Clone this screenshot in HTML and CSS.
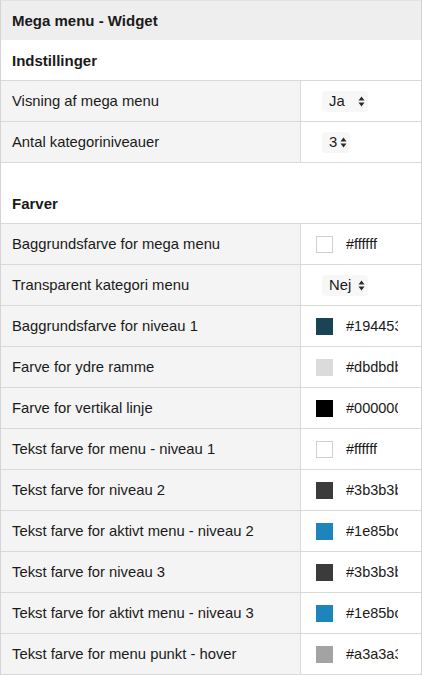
FILE: index.html
```html
<!DOCTYPE html>
<html lang="da">
<head>
  <meta charset="UTF-8" />
  <meta name="viewport" content="width=device-width, initial-scale=1.0"/>
  <title>Mega menu - Widget</title>
  <link rel="stylesheet" href="styles.css">
</head>
<body>

  <div class="widget">
    <div class="widget-title">Mega menu - Widget</div>

    <div class="section">Indstillinger</div>

    <div class="row">
      <div class="label">Visning af mega menu</div>
      <div class="value">
        <span class="select wide"><span class="select-text">Ja</span><svg class="arrows" width="7" height="11" viewBox="0 0 7 11"><path d="M0.5 4.5 L3.5 0.5 L6.5 4.5 Z M0.5 6.5 L3.5 10.5 L6.5 6.5 Z"/></svg></span>
      </div>
    </div>

    <div class="row">
      <div class="label">Antal kategoriniveauer</div>
      <div class="value">
        <span class="select"><span class="select-text">3</span><svg class="arrows" width="7" height="11" viewBox="0 0 7 11"><path d="M0.5 4.5 L3.5 0.5 L6.5 4.5 Z M0.5 6.5 L3.5 10.5 L6.5 6.5 Z"/></svg></span>
      </div>
    </div>

    <div class="section spaced">Farver</div>

    <div class="row">
      <div class="label">Baggrundsfarve for mega menu</div>
      <div class="value"><span class="swatch light" style="background:#ffffff"></span><span class="hex">#ffffff</span></div>
    </div>

    <div class="row">
      <div class="label">Transparent kategori menu</div>
      <div class="value">
        <span class="select wide"><span class="select-text">Nej</span><svg class="arrows" width="7" height="11" viewBox="0 0 7 11"><path d="M0.5 4.5 L3.5 0.5 L6.5 4.5 Z M0.5 6.5 L3.5 10.5 L6.5 6.5 Z"/></svg></span>
      </div>
    </div>

    <div class="row">
      <div class="label">Baggrundsfarve for niveau 1</div>
      <div class="value"><span class="swatch" style="background:#194453"></span><span class="hex">#194453</span></div>
    </div>

    <div class="row">
      <div class="label">Farve for ydre ramme</div>
      <div class="value"><span class="swatch" style="background:#dbdbdb"></span><span class="hex">#dbdbdb</span></div>
    </div>

    <div class="row">
      <div class="label">Farve for vertikal linje</div>
      <div class="value"><span class="swatch" style="background:#000000"></span><span class="hex">#000000</span></div>
    </div>

    <div class="row">
      <div class="label">Tekst farve for menu - niveau 1</div>
      <div class="value"><span class="swatch light" style="background:#ffffff"></span><span class="hex">#ffffff</span></div>
    </div>

    <div class="row">
      <div class="label">Tekst farve for niveau 2</div>
      <div class="value"><span class="swatch" style="background:#3b3b3b"></span><span class="hex">#3b3b3b</span></div>
    </div>

    <div class="row">
      <div class="label">Tekst farve for aktivt menu - niveau 2</div>
      <div class="value"><span class="swatch" style="background:#1e85bc"></span><span class="hex">#1e85bc</span></div>
    </div>

    <div class="row">
      <div class="label">Tekst farve for niveau 3</div>
      <div class="value"><span class="swatch" style="background:#3b3b3b"></span><span class="hex">#3b3b3b</span></div>
    </div>

    <div class="row">
      <div class="label">Tekst farve for aktivt menu - niveau 3</div>
      <div class="value"><span class="swatch" style="background:#1e85bc"></span><span class="hex">#1e85bc</span></div>
    </div>

    <div class="row">
      <div class="label">Tekst farve for menu punkt - hover</div>
      <div class="value"><span class="swatch" style="background:#a3a3a3"></span><span class="hex">#a3a3a3</span></div>
    </div>
  </div>

</body>
</html>
```

FILE: styles.css
```css
body {
  margin: 0;
  font-family: "Liberation Sans", Arial, sans-serif;
  font-size: 14.8px;
  color: #1a1a1a;
  background-color: #ffffff;
}

.widget {
  width: 422px;
  box-sizing: border-box;
  border-left: 1px solid #d4d4d4;
  border-right: 1px solid #d4d4d4;
  border-top: 1px solid #e2e2e2;
}

.widget-title {
  height: 39px;
  padding: 0 11px;
  display: flex;
  align-items: center;
  font-weight: bold;
  font-size: 15px;
  background-color: #eeeeee;
}

.section {
  height: 40px;
  padding: 0 11px;
  display: flex;
  align-items: center;
  font-weight: bold;
  font-size: 15px;
  border-bottom: 1px solid #d9d9d9;
}

.section.spaced {
  padding-top: 20px;
}

.row {
  display: grid;
  grid-template-columns: 300px 1fr;
  border-bottom: 1px solid #d9d9d9;
}

.label {
  height: 40px;
  padding: 0 11px;
  display: flex;
  align-items: center;
  background-color: #f4f4f4;
  border-right: 1px solid #d9d9d9;
}

.value {
  height: 40px;
  padding-left: 15px;
  display: flex;
  align-items: center;
  background-color: #ffffff;
}

.swatch {
  width: 17px;
  height: 17px;
  box-sizing: border-box;
  margin-right: 13px;
}

.swatch.light {
  border: 1px solid #cfcfcf;
}

.hex {
  width: 52px;
  overflow: hidden;
  white-space: nowrap;
  font-size: 14.5px;
}

.select {
  margin-left: 6px;
  height: 21px;
  padding: 0 3px 0 7px;
  display: flex;
  align-items: center;
  border-radius: 4px;
  background-color: #f7f7f7;
}

.select-text {
  margin-right: 3px;
}

.select.wide .select-text {
  width: 26px;
}

.arrows {
  fill: #2a2a2a;
}
```
